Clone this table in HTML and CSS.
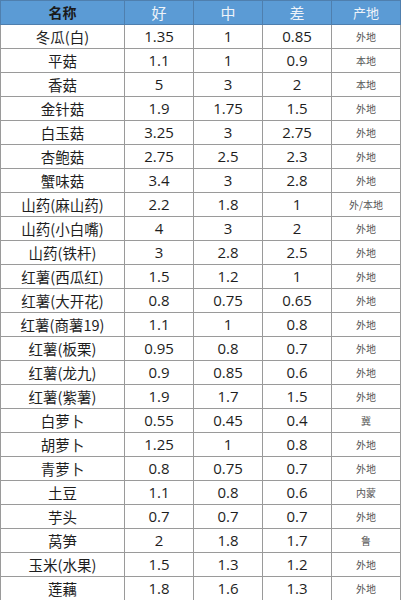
FILE: index.html
```html
<!DOCTYPE html>
<html>
<head>
<meta charset="utf-8">
<link rel="stylesheet" href="styles.css">
</head>
<body>
<table class="price">
<colgroup><col class="c-name"><col class="c-num"><col class="c-num"><col class="c-num"><col class="c-num"></colgroup>
<thead>
<tr><th class="h-name">名称</th><th>好</th><th>中</th><th>差</th><th class="h-origin">产地</th></tr>
</thead>
<tbody>
<tr><td>冬瓜(白)</td><td>1.35</td><td>1</td><td>0.85</td><td class="origin">外地</td></tr>
<tr><td>平菇</td><td>1.1</td><td>1</td><td>0.9</td><td class="origin">本地</td></tr>
<tr><td>香菇</td><td>5</td><td>3</td><td>2</td><td class="origin">本地</td></tr>
<tr><td>金针菇</td><td>1.9</td><td>1.75</td><td>1.5</td><td class="origin">外地</td></tr>
<tr><td>白玉菇</td><td>3.25</td><td>3</td><td>2.75</td><td class="origin">外地</td></tr>
<tr><td>杏鲍菇</td><td>2.75</td><td>2.5</td><td>2.3</td><td class="origin">外地</td></tr>
<tr><td>蟹味菇</td><td>3.4</td><td>3</td><td>2.8</td><td class="origin">外地</td></tr>
<tr><td>山药(麻山药)</td><td>2.2</td><td>1.8</td><td>1</td><td class="origin">外/本地</td></tr>
<tr><td>山药(小白嘴)</td><td>4</td><td>3</td><td>2</td><td class="origin">外地</td></tr>
<tr><td>山药(铁杆)</td><td>3</td><td>2.8</td><td>2.5</td><td class="origin">外地</td></tr>
<tr><td>红薯(西瓜红)</td><td>1.5</td><td>1.2</td><td>1</td><td class="origin">外地</td></tr>
<tr><td>红薯(大开花)</td><td>0.8</td><td>0.75</td><td>0.65</td><td class="origin">外地</td></tr>
<tr><td>红薯(商薯19)</td><td>1.1</td><td>1</td><td>0.8</td><td class="origin">外地</td></tr>
<tr><td>红薯(板栗)</td><td>0.95</td><td>0.8</td><td>0.7</td><td class="origin">外地</td></tr>
<tr><td>红薯(龙九)</td><td>0.9</td><td>0.85</td><td>0.6</td><td class="origin">外地</td></tr>
<tr><td>红薯(紫薯)</td><td>1.9</td><td>1.7</td><td>1.5</td><td class="origin">外地</td></tr>
<tr><td>白萝卜</td><td>0.55</td><td>0.45</td><td>0.4</td><td class="origin">冀</td></tr>
<tr><td>胡萝卜</td><td>1.25</td><td>1</td><td>0.8</td><td class="origin">外地</td></tr>
<tr><td>青萝卜</td><td>0.8</td><td>0.75</td><td>0.7</td><td class="origin">外地</td></tr>
<tr><td>土豆</td><td>1.1</td><td>0.8</td><td>0.6</td><td class="origin">内蒙</td></tr>
<tr><td>芋头</td><td>0.7</td><td>0.7</td><td>0.7</td><td class="origin">外地</td></tr>
<tr><td>莴笋</td><td>2</td><td>1.8</td><td>1.7</td><td class="origin">鲁</td></tr>
<tr><td>玉米(水果)</td><td>1.5</td><td>1.3</td><td>1.2</td><td class="origin">外地</td></tr>
<tr><td>莲藕</td><td>1.8</td><td>1.6</td><td>1.3</td><td class="origin">外地</td></tr>
</tbody>
</table>
</body>
</html>
```
FILE: styles.css
```css
html, body {
  margin: 0;
  padding: 0;
  background: #ffffff;
}
.price {
  border-collapse: collapse;
  table-layout: fixed;
  width: 400px;
  font-family: "Open Sans", "Noto Sans CJK SC", sans-serif;
  color: #1e1e1e;
}
.c-name { width: 124px; }
.c-num { width: 69px; }
.price th,
.price td {
  height: 23px;
  padding: 0;
  text-align: center;
  vertical-align: middle;
  line-height: 23px;
  border: 1px solid #9a9a9a;
  white-space: nowrap;
  overflow: hidden;
}
.price th {
  background: #5b9bd5;
  border-color: #4f7fae;
  font-weight: normal;
  font-size: 15px;
  color: #eef3f9;
  font-family: "Noto Sans CJK SC", sans-serif;
}
.price th.h-name {
  color: #1a1a1a;
  font-size: 14px;
  font-weight: bold;
}
.price th.h-origin {
  font-size: 13px;
}
.price td {
  font-size: 15px;
}
.price td:first-child {
  font-family: "Noto Sans CJK SC", sans-serif;
  font-size: 14.5px;
}
.price td.origin {
  font-family: "Noto Sans CJK SC", sans-serif;
  font-size: 10px;
  color: #555555;
}
```
